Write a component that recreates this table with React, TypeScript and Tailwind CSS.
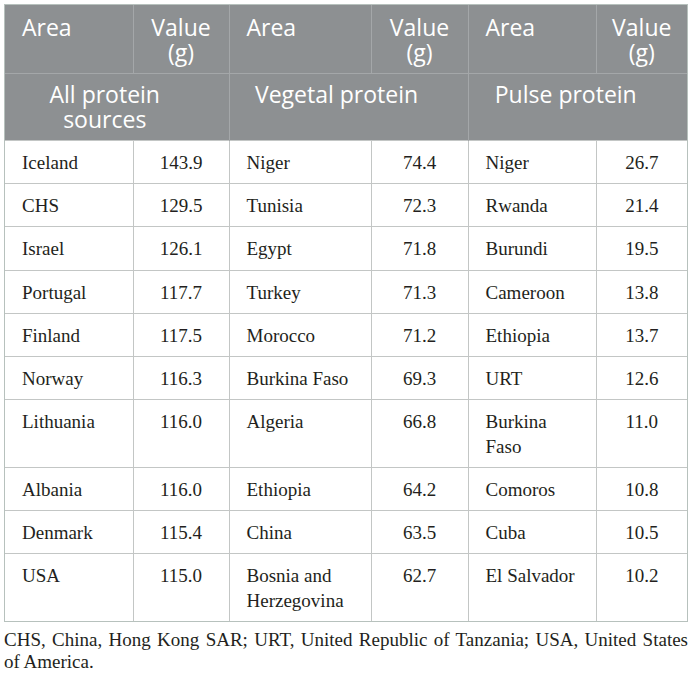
const rows = [
  ["Iceland", "143.9", "Niger", "74.4", "Niger", "26.7"],
  ["CHS", "129.5", "Tunisia", "72.3", "Rwanda", "21.4"],
  ["Israel", "126.1", "Egypt", "71.8", "Burundi", "19.5"],
  ["Portugal", "117.7", "Turkey", "71.3", "Cameroon", "13.8"],
  ["Finland", "117.5", "Morocco", "71.2", "Ethiopia", "13.7"],
  ["Norway", "116.3", "Burkina Faso", "69.3", "URT", "12.6"],
  ["Lithuania", "116.0", "Algeria", "66.8", "Burkina Faso", "11.0"],
  ["Albania", "116.0", "Ethiopia", "64.2", "Comoros", "10.8"],
  ["Denmark", "115.4", "China", "63.5", "Cuba", "10.5"],
  ["USA", "115.0", "Bosnia and Herzegovina", "62.7", "El Salvador", "10.2"],
];

const groups = ["All protein sources", "Vegetal protein", "Pulse protein"];

export default function App() {
  return (
    <div className="min-h-screen bg-white pt-[4px] pl-[4px] pr-[5px]">
      <div className="w-[684px] border border-[#b7c1bd]">
        <table className="w-full table-fixed border-collapse">
          <colgroup>
            <col className="w-[128px]" />
            <col className="w-[96px]" />
            <col className="w-[142px]" />
            <col className="w-[97px]" />
            <col className="w-[128px]" />
            <col />
          </colgroup>
          <thead className="bg-[#8d9092] font-['Open_Sans',sans-serif] text-[23px] leading-[25px] text-white">
            <tr>
              {[0, 1, 2].map((g) => (
                <>
                  <th
                    key={`a${g}`}
                    className="border-r border-b border-[#a4a7a9] pt-[10px] pb-[8px] pl-[17px] text-left align-top font-normal"
                  >
                    Area
                  </th>
                  <th
                    key={`v${g}`}
                    className={
                      g === 2
                        ? "border-b border-[#a4a7a9] pt-[10px] pb-[8px] text-center align-top font-normal"
                        : "border-r border-b border-[#a4a7a9] pt-[10px] pb-[8px] text-center align-top font-normal"
                    }
                  >
                    Value
                    <br />
                    (g)
                  </th>
                </>
              ))}
            </tr>
            <tr>
              {groups.map((g, i) => (
                <th
                  key={g}
                  colSpan={2}
                  className={
                    i === 2
                      ? "pt-[8px] pb-[8px] pl-[15px] pr-[39px] text-center align-top font-normal"
                      : "border-r border-[#a4a7a9] pt-[8px] pb-[8px] pl-[15px] pr-[39px] text-center align-top font-normal"
                  }
                >
                  {g}
                </th>
              ))}
            </tr>
          </thead>
          <tbody className="font-['Liberation_Serif',serif] text-[19px] leading-[24.4px] text-[#231f20]">
            {rows.map((r, ri) => (
              <tr key={ri}>
                {r.map((c, ci) => (
                  <td
                    key={ci}
                    className={[
                      "pt-[10px] pb-[7.8px] align-top border-[#c3c6c5]",
                      ci % 2 === 0 ? "pl-[17px] pr-[14px] text-left" : "text-center",
                      ci < 5 ? "border-r" : "",
                      ri === 0 ? "border-t" : "",
                      ri < rows.length - 1 ? "border-b" : "",
                    ].join(" ")}
                  >
                    {c}
                  </td>
                ))}
              </tr>
            ))}
          </tbody>
        </table>
      </div>
      <p className="mt-[7px] text-justify font-['Liberation_Serif',serif] text-[19px] leading-[22px] text-[#231f20]">
        CHS, China, Hong Kong SAR; URT, United Republic of Tanzania; USA, United States of America.
      </p>
    </div>
  );
}
